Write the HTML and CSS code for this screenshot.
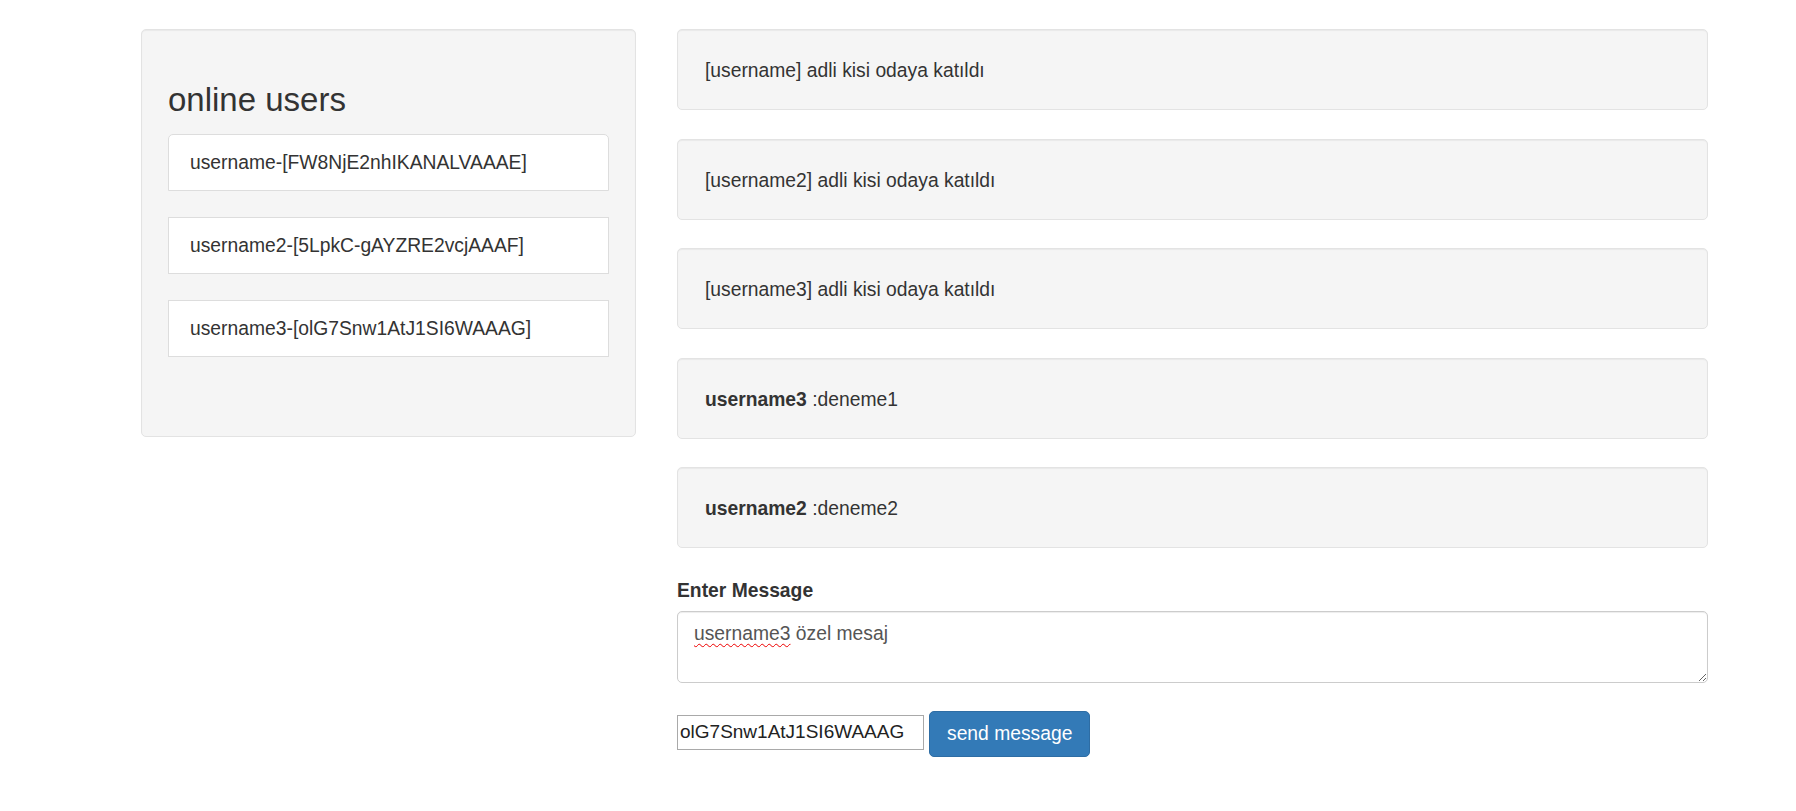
FILE: index.html
```html
<!DOCTYPE html>
<html lang="tr">
<head>
<meta charset="utf-8">
<title>Chat</title>
<link rel="stylesheet" href="styles.css">
</head>
<body>
<div class="page">
  <aside class="col-users">
    <div class="well users-well">
      <h3 class="users-title">online users</h3>
      <ul class="user-list">
        <li class="user-item first">username-[FW8NjE2nhIKANALVAAAE]</li>
        <li class="user-item">username2-[5LpkC-gAYZRE2vcjAAAF]</li>
        <li class="user-item">username3-[olG7Snw1AtJ1SI6WAAAG]</li>
      </ul>
    </div>
  </aside>
  <main class="col-chat">
    <div class="well msg">[username] adli kisi odaya katıldı</div>
    <div class="well msg">[username2] adli kisi odaya katıldı</div>
    <div class="well msg">[username3] adli kisi odaya katıldı</div>
    <div class="well msg"><strong>username3</strong> :deneme1</div>
    <div class="well msg"><strong>username2</strong> :deneme2</div>
    <div class="form-group">
      <label class="form-label">Enter Message</label>
      <div class="msg-input" contenteditable="true" role="textbox"><span class="misspelled">username3</span> özel mesaj</div>
    </div>
    <div class="send-row">
      <input class="target-id" type="text" value="olG7Snw1AtJ1SI6WAAAG">
      <button class="btn-send" type="button">send message</button>
    </div>
  </main>
</div>
</body>
</html>
```

FILE: styles.css
```css
* { box-sizing: border-box; }

html, body {
  margin: 0;
  padding: 0;
  background: #fff;
}

body {
  font-family: "Liberation Sans", Arial, Helvetica, sans-serif;
  font-size: 19.3px;
  line-height: 27px;
  color: #333;
}

.page {
  display: flex;
  align-items: flex-start;
  gap: 41px;
  padding: 29px 88px 0 141px;
}

.col-users {
  width: 495px;
  flex: none;
}

.col-chat {
  flex: 1;
  min-width: 0;
}

.well {
  background: #f5f5f5;
  border: 1px solid #e3e3e3;
  border-radius: 5px;
  box-shadow: inset 0 1px 1px rgba(0, 0, 0, 0.05);
}

.users-well {
  padding: 26px;
}

.users-title {
  margin: 26px 0 16px;
  font-size: 33px;
  line-height: 36px;
  font-weight: 500;
  color: #333;
}

.user-list {
  display: flow-root;
  list-style: none;
  margin: 0 0 27px;
  padding: 0;
}

.user-item {
  background: #fff;
  border: 1px solid #ddd;
  padding: 14px 21px;
  height: 57px;
  line-height: 27px;
  margin-bottom: 26px;
}

.user-item.first {
  border-top-left-radius: 5px;
  border-top-right-radius: 5px;
}

.msg {
  height: 81px;
  padding: 27px 27px 25px;
  margin-bottom: 28.5px;
}

.msg strong {
  font-weight: 700;
}

.form-label {
  display: block;
  font-weight: 700;
  margin-bottom: 7px;
}

.msg-input {
  height: 72px;
  padding: 8px 16px;
  border: 1px solid #ccc;
  border-radius: 5px;
  box-shadow: inset 0 1px 1px rgba(0, 0, 0, 0.075);
  color: #555;
  background: #fff;
  overflow: auto;
  resize: vertical;
  outline: none;
}

.misspelled {
  text-decoration: underline wavy #e00;
  text-decoration-thickness: 1px;
  text-underline-offset: 3px;
}

.send-row {
  display: flex;
  align-items: flex-start;
  gap: 5px;
  margin-top: 28px;
}

.target-id {
  width: 247px;
  height: 35px;
  margin-top: 4px;
  padding: 1px 2px;
  border: 1px solid #a9a9a9;
  font-family: "Liberation Sans", Arial, sans-serif;
  font-size: 19px;
  color: #222;
  background: #fff;
}

.btn-send {
  height: 46px;
  padding: 0 17px;
  line-height: 27px;
  font-family: "Liberation Sans", Arial, sans-serif;
  font-size: 19.3px;
  color: #fff;
  background: #337ab7;
  border: 1px solid #2e6da4;
  border-radius: 5px;
  cursor: pointer;
}
```
